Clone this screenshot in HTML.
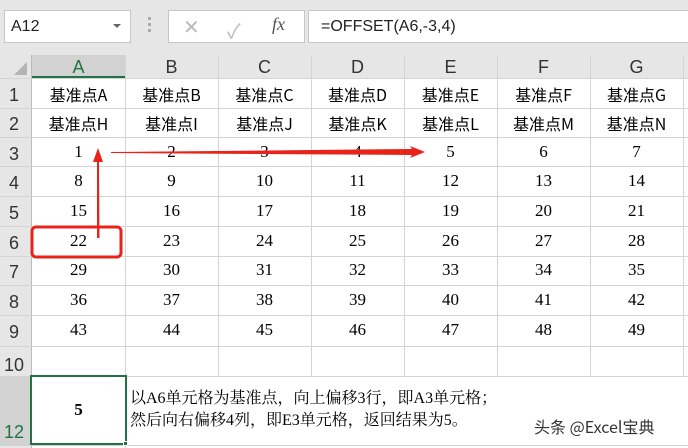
<!DOCTYPE html>
<html><head><meta charset="utf-8"><style>
*{margin:0;padding:0;box-sizing:border-box}
body{width:688px;height:448px;background:#e6e6e6;position:relative;overflow:hidden;font-family:"Liberation Sans","Noto Sans CJK SC",sans-serif}
.abs{position:absolute}
.box{position:absolute;background:#fff;border:1px solid #c6c6c6}
.cell{position:absolute;text-align:center;color:#000}
.cjk{font-family:"WenQuanYi Zen Hei","Noto Sans CJK SC",sans-serif;font-size:16px}
.num{font-family:"Liberation Serif","Noto Serif CJK SC",serif;font-size:17px}
.rh{position:absolute;left:0;width:31px;font-size:18px;color:#333;text-align:left;padding-left:9px}
.ch{position:absolute;top:55px;height:23px;font-size:18px;color:#333;text-align:center;line-height:24px}
</style></head><body>
<div class="box" style="left:4px;top:10px;width:127px;height:33px"></div>
<div class="abs" style="left:11px;top:18px;font-size:16px;color:#222">A12</div>
<div class="abs" style="left:113px;top:24px;width:0;height:0;border-left:4px solid transparent;border-right:4px solid transparent;border-top:4px solid #666"></div>
<div class="abs" style="left:148px;top:17px;width:3px;height:3px;background:#aaa;box-shadow:0 6px 0 #aaa,0 12px 0 #aaa"></div>
<div class="box" style="left:168px;top:10px;width:137px;height:33px"></div>
<div class="abs" style="left:183px;top:15px;font-size:20px;color:#bbb">✕</div>
<div class="abs" style="left:227px;top:15px;font-size:20px;color:#bbb">✓</div>
<div class="abs" style="left:272px;top:14px;font-size:18px;color:#555;font-family:'Liberation Serif',serif;font-style:italic">fx</div>
<div class="box" style="left:308px;top:10px;width:385px;height:33px"></div>
<div class="abs" style="left:321px;top:18px;font-size:16px;color:#222">=OFFSET(A6,-3,4)</div>
<div class="abs" style="left:31px;top:78px;width:657px;height:370px;background:#fff"></div>
<div class="abs" style="left:32px;top:55px;width:93px;height:23px;background:#d2d2d2;border-bottom:2px solid #217346"></div>
<div class="abs" style="left:0;top:376px;width:31px;height:70px;background:#d2d2d2"></div>
<div class="abs" style="left:14px;top:62px;width:0;height:0;border-left:13px solid transparent;border-bottom:13px solid #b4b4b4"></div>
<svg class="abs" style="left:0;top:0" width="688" height="448">
<g stroke="#d4d4d4" stroke-width="1">
<line x1="31.5" y1="55" x2="31.5" y2="448" stroke="#bbb"/>
<line x1="125.5" y1="55" x2="125.5" y2="448"/><line x1="218.5" y1="55" x2="218.5" y2="376"/>
<line x1="311.5" y1="55" x2="311.5" y2="376"/><line x1="404.5" y1="55" x2="404.5" y2="376"/>
<line x1="497.5" y1="55" x2="497.5" y2="376"/><line x1="590.5" y1="55" x2="590.5" y2="376"/>
<line x1="683.5" y1="55" x2="683.5" y2="376"/>
<line x1="0" y1="78.5" x2="688" y2="78.5"/><line x1="0" y1="108.5" x2="688" y2="108.5"/>
<line x1="0" y1="137.5" x2="688" y2="137.5"/><line x1="0" y1="166.5" x2="688" y2="166.5"/>
<line x1="0" y1="196.5" x2="688" y2="196.5"/><line x1="0" y1="226.5" x2="688" y2="226.5"/>
<line x1="0" y1="256.5" x2="688" y2="256.5"/><line x1="0" y1="285.5" x2="688" y2="285.5"/>
<line x1="0" y1="315.5" x2="688" y2="315.5"/><line x1="0" y1="346.5" x2="688" y2="346.5"/>
<line x1="0" y1="376.5" x2="688" y2="376.5"/><line x1="0" y1="445.5" x2="688" y2="445.5"/>
</g>
</svg>
<div class="ch" style="left:32px;width:93px;color:#217346">A</div>
<div class="ch" style="left:125px;width:93px">B</div>
<div class="ch" style="left:218px;width:93px">C</div>
<div class="ch" style="left:311px;width:93px">D</div>
<div class="ch" style="left:404px;width:93px">E</div>
<div class="ch" style="left:497px;width:93px">F</div>
<div class="ch" style="left:590px;width:93px">G</div>
<div class="rh" style="top:85px">1</div><div class="rh" style="top:114px">2</div>
<div class="rh" style="top:144px">3</div><div class="rh" style="top:173px">4</div>
<div class="rh" style="top:203px">5</div><div class="rh" style="top:233px">6</div>
<div class="rh" style="top:262px">7</div><div class="rh" style="top:292px">8</div>
<div class="rh" style="top:322px">9</div><div class="rh" style="top:355px;padding-left:4px">10</div>
<div class="rh" style="top:422px;padding-left:4px;color:#217346">12</div>
<div id="g"></div>
<script>
var cols=[32,125,218,311,404,497,590],rows=[82,111,141,170,200,230,259,289,319];
var h='';var L1='ABCDEFG',L2='HIJKLMN';
for(var c=0;c<7;c++){
h+='<div class="cell cjk" style="left:'+cols[c]+'px;width:93px;top:'+rows[0]+'px">基准点'+L1[c]+'</div>';
h+='<div class="cell cjk" style="left:'+cols[c]+'px;width:93px;top:'+rows[1]+'px">基准点'+L2[c]+'</div>';
for(var r=0;r<7;r++)h+='<div class="cell num" style="left:'+cols[c]+'px;width:93px;top:'+(rows[r+2]+1)+'px">'+(r*7+c+1)+'</div>';}
document.getElementById('g').innerHTML=h;
</script>
<div class="abs" style="left:30px;top:375px;width:97px;height:70px;border:2px solid #217346"></div>
<div class="abs" style="left:123px;top:441px;width:5px;height:5px;background:#217346;border:1px solid #fff"></div>
<div class="cell num" style="left:32px;width:93px;top:400px;font-weight:bold">5</div>
<div class="abs" style="left:130px;top:388px;font-size:16px;line-height:22px;font-family:'Liberation Serif','Noto Serif CJK SC',serif;color:#000">以A6单元格为基准点，向上偏移3行，即A3单元格；<br>然后向右偏移4列，即E3单元格，返回结果为5。</div>
<div class="abs" style="left:534px;top:414px;font-size:16px;color:#333;font-family:'Noto Sans CJK SC',sans-serif">头条 @Excel宝典</div>
<svg class="abs" style="left:0;top:0" width="688" height="448">
<rect x="32" y="227" width="89" height="30" rx="4" fill="none" stroke="#e8231a" stroke-width="3"/>
<polygon points="97,238 99.5,238 99,162 103,162 98,148 93,162 97,162" fill="#e8231a"/>
<polygon points="111,152 412,149 410,146 425,152 410,158 412,155 111,153" fill="#e8231a"/>
</svg>
</body></html>
